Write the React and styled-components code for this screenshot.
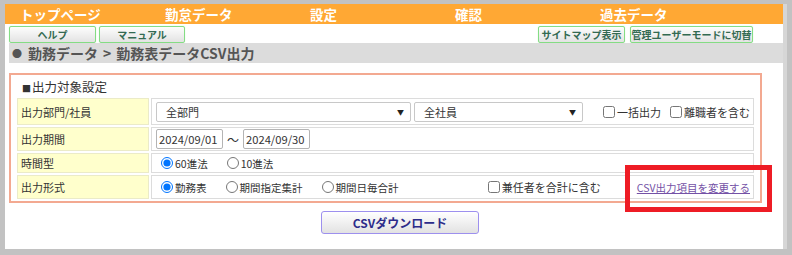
import React from 'react';
import styled, { createGlobalStyle } from 'styled-components';

const GlobalStyle = createGlobalStyle`
body {
  margin: 0;
  background: #c2c2c2;
  font-family: "Noto Sans CJK JP", "Noto Sans", sans-serif;
  color: #333;
}
`;

const Page = styled.div`
position: relative;
margin: 4px 0 0 5px;
width: 778px;
height: 245px;
background: #fff;
box-shadow: 4px 0 0 #d6d6d6;
display: flex;
flex-direction: column;
`;

const NavBar = styled.div`
height: 20px;
background: #ffa834;
display: flex;
align-items: center;
`;

const NavItem = styled.div`
width: 145px;
padding-left: 15px;
box-sizing: border-box;
color: #fff;
font-size: 13.5px;
font-weight: bold;
line-height: 20px;
white-space: nowrap;
`;

const ButtonRow = styled.div`
height: 19px;
display: flex;
align-items: center;
padding: 1px 30px 0 4px;
box-sizing: border-box;
gap: 3px;
`;

const RightGroup = styled.div`
margin-left: auto;
display: flex;
gap: 5px;
`;

const SubButton = styled.button`
width: ${(p) => p.w}px;
height: 17px;
padding: 0;
border: 1px solid #84dc84;
border-radius: 2px;
box-shadow: 0 0 1px #b0f0b0;
background: linear-gradient(#fdfdfd, #e3e3e3);
font-family: inherit;
font-size: 10px;
font-weight: bold;
color: #336a52;
line-height: 15px;
white-space: nowrap;
`;

const Breadcrumb = styled.div`
margin-left: 4px;
height: 20px;
background: #dcdcdc;
padding-left: 3px;
display: flex;
align-items: center;
font-size: 14px;
font-weight: bold;
color: #555;
white-space: nowrap;
`;

const Bullet = styled.span`
font-size: 10px;
margin-right: 6px;
`;

const Sep = styled.span`
margin: 0 5px;
`;

const SettingBox = styled.div`
margin: 10px 0 0 4px;
width: 753px;
box-sizing: border-box;
border: 2px solid #f3a991;
padding: 0 6px 2px;
`;

const BoxTitle = styled.div`
height: 23px;
padding-left: 5px;
font-size: 12.5px;
line-height: 23px;
color: #333;
`;

const Square = styled.span`
font-size: 9px;
margin-right: 1px;
`;

const FormGrid = styled.div`
display: grid;
grid-template-columns: 132px 603px;
grid-template-rows: 27px 24px 20px 24px;
gap: 2px;
`;

const LabelCell = styled.div`
background: #ffffcc;
border: 1px solid #ebebc8;
box-sizing: border-box;
padding-left: 3px;
display: flex;
align-items: center;
font-size: 11px;
color: #333;
`;

const DataCell = styled.div`
border: 1px solid #dcdcdc;
box-sizing: border-box;
padding: 0 3px 0 4px;
display: flex;
align-items: center;
font-size: 11px;
color: #333;
white-space: nowrap;
`;

const SelectWrap = styled.div`
position: relative;
margin-right: 3px;
&::after {
  content: "▼";
  position: absolute;
  right: 7px;
  top: 50%;
  transform: translateY(-50%);
  font-size: 7px;
  color: #222;
  pointer-events: none;
}
`;

const Select = styled.select`
appearance: none;
width: ${(p) => p.w}px;
height: 20px;
border: 1px solid #c8c8c8;
border-radius: 2px;
background: #fff;
padding: 0 0 0 9px;
font-family: inherit;
font-size: 11px;
color: #333;
`;

const Options = styled.div`
margin-left: auto;
display: flex;
align-items: center;
gap: ${(p) => p.gap || 8}px;
`;

const Check = styled.label`
display: flex;
align-items: center;
font-size: 11px;
color: #333;
input {
  width: 12px;
  height: 12px;
  margin: 0 2px 0 0;
}
`;

const Radio = styled.label`
display: flex;
align-items: center;
margin-right: ${(p) => p.gap || 14}px;
font-size: 10.5px;
color: #333;
input {
  width: 12px;
  height: 12px;
  margin: 0 2px 0 5px;
}
`;

const DateInput = styled.input`
width: 67px;
height: 20px;
box-sizing: border-box;
border: 1px solid #b4b4b4;
border-radius: 2px;
padding: 0 1px 0 2px;
font-family: inherit;
font-size: 11.2px;
color: #333;
`;

const Tilde = styled.span`
margin: 0 4px;
font-size: 12px;
color: #333;
`;

const CsvLink = styled.a`
color: #7451a6;
text-decoration: underline;
font-size: 10.5px;
`;

const DownloadRow = styled.div`
display: flex;
justify-content: center;
padding-left: 12px;
margin-top: 8px;
`;

const DownloadButton = styled.button`
width: 158px;
height: 23px;
border: 1px solid #9d90ee;
border-radius: 3px;
background: linear-gradient(#ffffff, #e2e2e2);
font-family: inherit;
font-size: 12px;
font-weight: bold;
color: #2c2c8a;
`;

const Highlight = styled.div`
position: absolute;
left: 620px;
top: 161px;
width: 147px;
height: 47px;
box-sizing: border-box;
border: 5px solid #ee1c25;
pointer-events: none;
`;

const navItems = ['トップページ', '勤怠データ', '設定', '確認', '過去データ'];

export default function App() {
  return (
    <>
      <GlobalStyle />
      <Page>
        <NavBar>
          {navItems.map((n) => (
            <NavItem key={n}>{n}</NavItem>
          ))}
        </NavBar>
        <ButtonRow>
          <SubButton w={87}>ヘルプ</SubButton>
          <SubButton w={86}>マニュアル</SubButton>
          <RightGroup>
            <SubButton w={87}>サイトマップ表示</SubButton>
            <SubButton w={123}>管理ユーザーモードに切替</SubButton>
          </RightGroup>
        </ButtonRow>
        <Breadcrumb>
          <Bullet>●</Bullet>勤務データ<Sep>&gt;</Sep>勤務表データCSV出力
        </Breadcrumb>

        <SettingBox>
          <BoxTitle><Square>■</Square>出力対象設定</BoxTitle>
          <FormGrid>
            <LabelCell>出力部門/社員</LabelCell>
            <DataCell>
              <SelectWrap>
                <Select w={255} defaultValue="all">
                  <option value="all">全部門</option>
                </Select>
              </SelectWrap>
              <SelectWrap>
                <Select w={169} defaultValue="all">
                  <option value="all">全社員</option>
                </Select>
              </SelectWrap>
              <Options gap={9}>
                <Check><input type="checkbox" />一括出力</Check>
                <Check><input type="checkbox" />離職者を含む</Check>
              </Options>
            </DataCell>

            <LabelCell>出力期間</LabelCell>
            <DataCell>
              <DateInput defaultValue="2024/09/01" />
              <Tilde>〜</Tilde>
              <DateInput defaultValue="2024/09/30" />
            </DataCell>

            <LabelCell>時間型</LabelCell>
            <DataCell>
              <Radio><input type="radio" name="time" defaultChecked />60進法</Radio>
              <Radio><input type="radio" name="time" />10進法</Radio>
            </DataCell>

            <LabelCell>出力形式</LabelCell>
            <DataCell>
              <Radio><input type="radio" name="fmt" defaultChecked />勤務表</Radio>
              <Radio><input type="radio" name="fmt" />期間指定集計</Radio>
              <Radio><input type="radio" name="fmt" />期間日毎合計</Radio>
              <Options gap={36}>
                <Check><input type="checkbox" />兼任者を合計に含む</Check>
                <CsvLink href="#">CSV出力項目を変更する</CsvLink>
              </Options>
            </DataCell>
          </FormGrid>
        </SettingBox>

        <DownloadRow>
          <DownloadButton>CSVダウンロード</DownloadButton>
        </DownloadRow>

        <Highlight />
      </Page>
    </>
  );
}
